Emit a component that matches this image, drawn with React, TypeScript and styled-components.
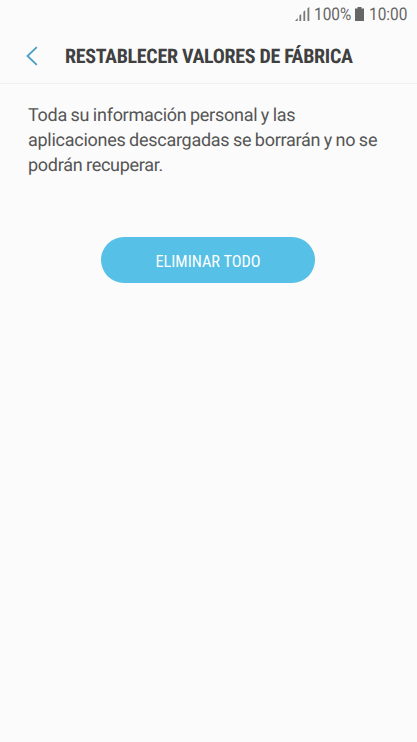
import React from "react";
import styled, { createGlobalStyle } from "styled-components";

const Global = createGlobalStyle`
  * { box-sizing: border-box; }
  body { margin: 0; background: #fbfbfb; font-family: Roboto, sans-serif; text-rendering: geometricPrecision; }
`;
const Screen = styled.main`
  width: 417px; height: 742px; background: #fbfbfb; overflow: hidden;
  display: flex; flex-direction: column;
`;
const StatusBar = styled.div`
  height: 28px; display: flex; align-items: center;
  padding-left: 295px; color: #666; font-size: 17.5px; line-height: 28px;
`;
const Signal = styled.svg`flex: none; width: 15px; height: 14px; margin-right: 4px;`;
const Battery = styled.svg`flex: none; width: 9px; height: 14px; margin-right: 5px;`;
const StatusText = styled.span<{ $w: number }>`
  flex: none; width: ${(p) => p.$w}px; padding-top: 2px; white-space: nowrap;
  transform: scaleX(0.88); transform-origin: left center;
`;
const Header = styled.header`
  height: 56px; display: flex; align-items: center; padding: 1px 0 0 26px;
  border-bottom: 1px solid #f0f0f0;
`;
const Back = styled.svg`width: 12px; height: 20px; margin-right: 27px;`;
const Title = styled.h1`
  margin: 0; font: 700 20px/24px "Roboto Condensed", Roboto, sans-serif;
  color: #404040; white-space: nowrap; letter-spacing: -0.32px;
`;
const Message = styled.p`
  margin: 19px 28px 0; font-size: 18px; line-height: 25px; letter-spacing: -0.27px; word-spacing: -0.6px;
  color: #555; white-space: nowrap;
`;
const Action = styled.button`
  margin: 59px 0 0 101px; width: 214px; height: 46px; border: 0; border-radius: 23px;
  background: #56c0e6; color: #fff; font: 400 16.3px/46px "Roboto Condensed", Roboto, sans-serif; padding: 2px 0 0;
`;

export default function App() {
  return (
    <Screen>
      <Global />
      <StatusBar>
        <Signal viewBox="0 0 15 14" fill="#777">
          <path d="M0 14l2.7-3v3zM4.4 8.6L6.2 7v7H4.4zM8.4 4.8L10.2 3.2V14H8.4zM12.5 1.2L14.3 0v14h-1.8z" />
        </Signal>
        <StatusText $w={41}>100%</StatusText>
        <Battery viewBox="0 0 9 14" fill="#666"><path d="M2.5 0h4v1.5H9V14H0V1.5h2.5z" /></Battery>
        <StatusText $w={39}>10:00</StatusText>
      </StatusBar>
      <Header>
        <Back viewBox="0 0 12 20" fill="none" stroke="#4a9fc6" strokeWidth="1.8"><path d="M10.8 1.2L1.5 10l9.3 8.8" /></Back>
        <Title>RESTABLECER VALORES DE FÁBRICA</Title>
      </Header>
      <Message>
        Toda su información personal y las<br />
        aplicaciones descargadas se borrarán y no se<br />
        podrán recuperar.
      </Message>
      <Action>ELIMINAR TODO</Action>
    </Screen>
  );
}
